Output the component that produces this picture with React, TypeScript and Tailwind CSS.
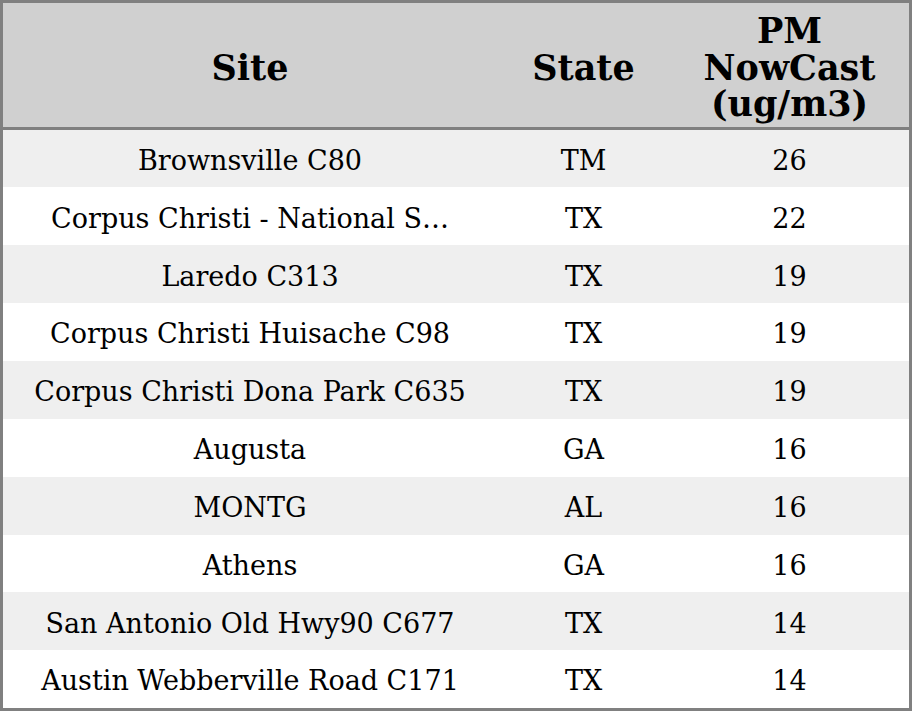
const rows: [string, string, number][] = [
  ["Brownsville C80", "TM", 26],
  ["Corpus Christi - National S…", "TX", 22],
  ["Laredo C313", "TX", 19],
  ["Corpus Christi Huisache C98", "TX", 19],
  ["Corpus Christi Dona Park C635", "TX", 19],
  ["Augusta", "GA", 16],
  ["MONTG", "AL", 16],
  ["Athens", "GA", 16],
  ["San Antonio Old Hwy90 C677", "TX", 14],
  ["Austin Webberville Road C171", "TX", 14],
];

export default function App() {
  return (
    <div className="h-[711px] w-[912px] bg-white font-['DejaVu_Serif',serif] text-black">
      <div className="flex h-full flex-col border-[3px] border-[#808080]">
        <div className="grid h-[127px] grid-cols-[494px_173px_239px] items-center border-b-[3px] border-[#808080] bg-[#d0d0d0] pt-[6px] text-center text-[35px] font-bold leading-[36.5px]">
          <div>Site</div>
          <div>State</div>
          <div>
            PM
            <br />
            NowCast
            <br />
            (ug/m3)
          </div>
        </div>
        {rows.map(([site, state, value], i) => (
          <div
            key={i}
            className={`grid h-[58px] grid-cols-[494px_173px_239px] items-center pt-[5px] text-center text-[27px] ${
              i % 2 === 0 ? "bg-[#efefef]" : "bg-white"
            }`}
          >
            <div>{site}</div>
            <div>{state}</div>
            <div>{value}</div>
          </div>
        ))}
      </div>
    </div>
  );
}
